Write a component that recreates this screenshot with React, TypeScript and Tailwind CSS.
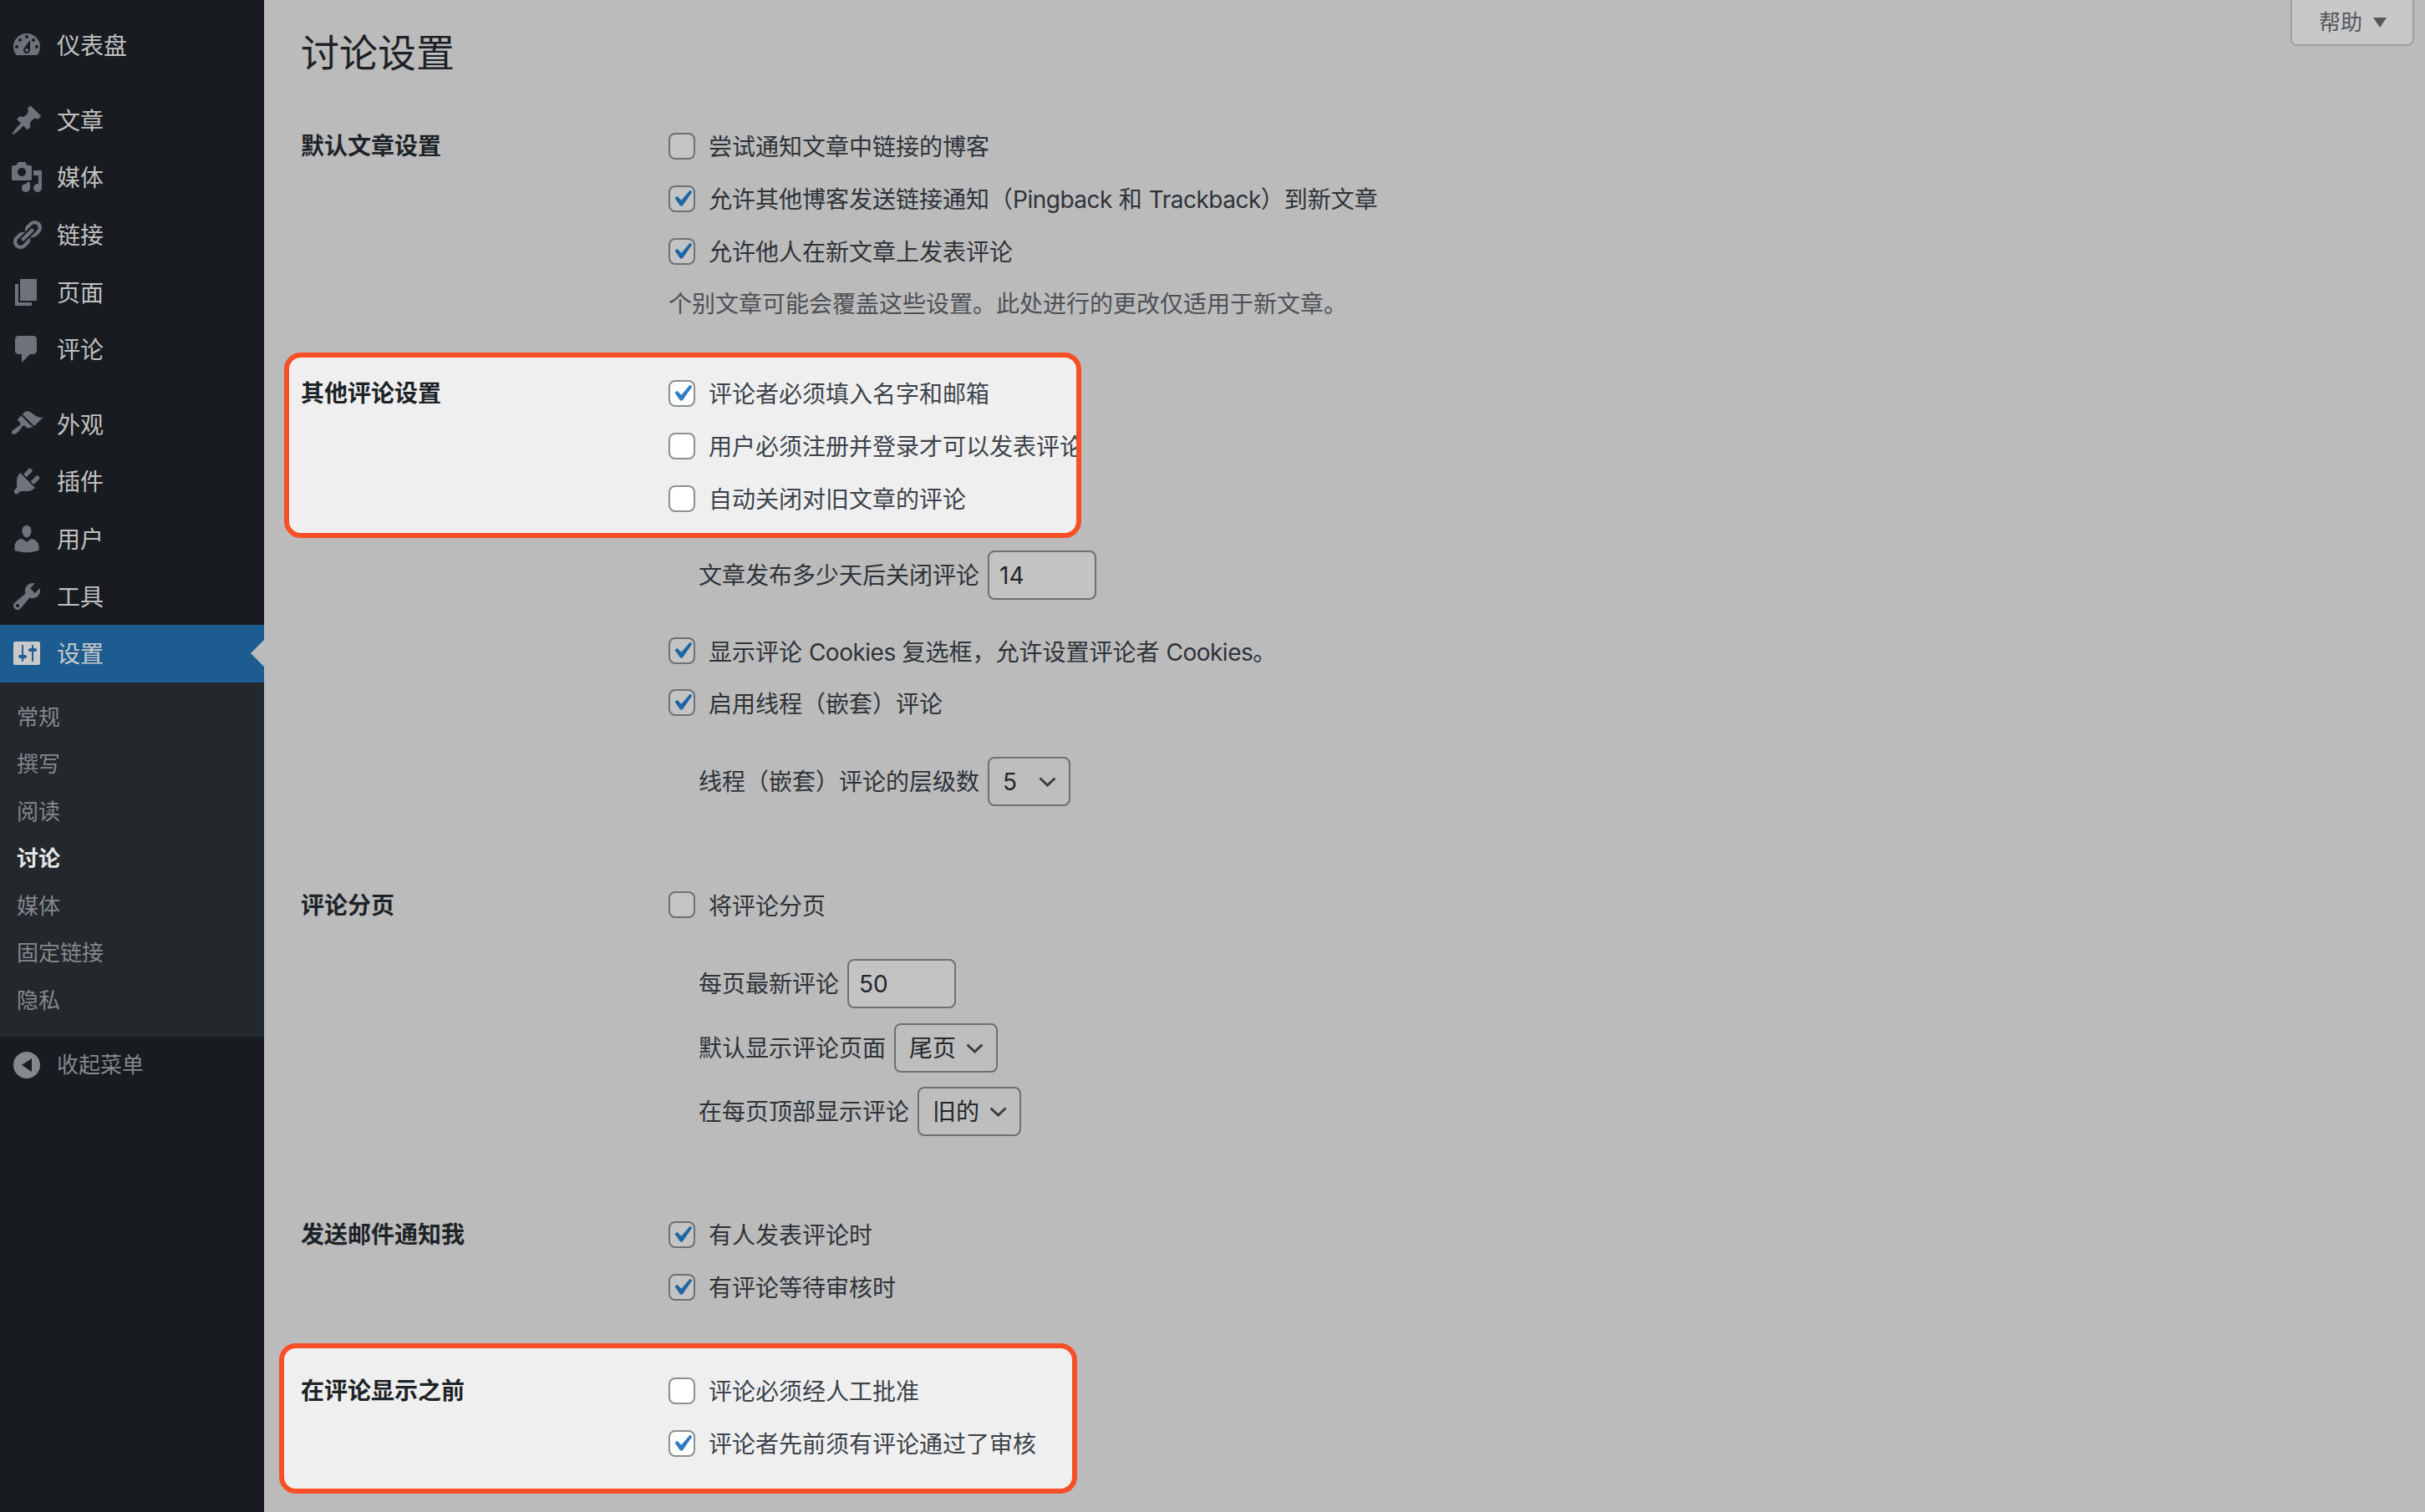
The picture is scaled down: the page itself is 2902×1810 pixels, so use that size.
import React from 'react';

const FONT = 'font-["Inter","Noto_Sans_CJK_SC",sans-serif]';

const ICONS: Record<string, string> = {
	dashboard:
		'M3.76 16h12.48c1.1-1.37 1.76-3.11 1.76-5 0-4.42-3.58-8-8-8s-8 3.58-8 8c0 1.89.66 3.63 1.76 5zM10 4c.55 0 1 .45 1 1s-.45 1-1 1-1-.45-1-1 .45-1 1-1zM6 6c.55 0 1 .45 1 1s-.45 1-1 1-1-.45-1-1 .45-1 1-1zm8 0c.55 0 1 .45 1 1s-.45 1-1 1-1-.45-1-1 .45-1 1-1zm-5.37 5.55L12 7v6c0 1.1-.9 2-2 2s-2-.9-2-2c0-.57.24-1.08.63-1.45zM4 10c.55 0 1 .45 1 1s-.45 1-1 1-1-.45-1-1 .45-1 1-1zm12 0c.55 0 1 .45 1 1s-.45 1-1 1-1-.45-1-1 .45-1 1-1zm-5 3c0-.55-.45-1-1-1s-1 .45-1 1 .45 1 1 1 1-.45 1-1z',
	post: 'M10.44 3.02l1.82-1.82 6.36 6.35-1.83 1.82c-1.05-.68-2.48-.57-3.41.36l-.75.75c-.92.93-1.04 2.35-.35 3.41l-1.83 1.82-2.41-2.41-2.8 2.79c-.42.42-3.38 2.71-3.8 2.29s1.86-3.39 2.28-3.81l2.79-2.79L4.1 9.36l1.83-1.82c1.05.69 2.48.57 3.4-.36l.75-.75c.93-.92 1.05-2.35.36-3.41z',
	media:
		'M13 11V4c0-.55-.45-1-1-1h-1.67L9 1H5L3.67 3H2c-.55 0-1 .45-1 1v7c0 .55.45 1 1 1h10c.55 0 1-.45 1-1zM7 4.5c1.38 0 2.5 1.12 2.5 2.5S8.38 9.5 7 9.5 4.5 8.38 4.5 7 5.62 4.5 7 4.5zM14 6h5v10.5c0 1.38-1.12 2.5-2.5 2.5S14 17.88 14 16.5s1.12-2.5 2.5-2.5c.17 0 .34.02.5.05V9h-3V6zm-4 8.05V13h2v3.5c0 1.38-1.12 2.5-2.5 2.5S7 17.88 7 16.5 8.12 14 9.5 14c.17 0 .34.02.5.05z',
	links:
		'M17.74 2.76c1.68 1.69 1.68 4.41 0 6.1l-1.53 1.52c-1.12 1.12-2.7 1.47-4.14 1.09l2.62-2.61.76-.77.76-.76c.84-.84.84-2.2 0-3.04-.84-.85-2.2-.85-3.04 0l-.77.76-3.38 3.38c-.37-1.44-.02-3.02 1.1-4.14l1.52-1.53c1.69-1.68 4.42-1.68 6.1 0zM8.59 13.43l5.34-5.34c.42-.42.42-1.1 0-1.52-.44-.43-1.13-.39-1.53 0l-5.33 5.34c-.42.42-.42 1.1 0 1.52.44.43 1.13.39 1.52 0zm-.76 2.29l4.14-4.15c.38 1.44.03 3.02-1.09 4.14l-1.52 1.53c-1.69 1.68-4.41 1.68-6.1 0-1.68-1.68-1.68-4.42 0-6.1l1.53-1.52c1.12-1.12 2.7-1.47 4.14-1.1l-4.14 4.15c-.85.84-.85 2.2 0 3.05.84.84 2.2.84 3.04 0z',
	page: 'M6 15V2h10v13H6zm-1 1h8v2H3V5h2v11z',
	comments: 'M5 2h9c1.1 0 2 .9 2 2v7c0 1.1-.9 2-2 2h-2l-5 5v-5H5c-1.1 0-2-.9-2-2V4c0-1.1.9-2 2-2z',
	appearance:
		'M14.48 11.06L7.41 3.99l1.5-1.5c.5-.56 2.3-.47 3.51.32 1.21.8 1.43 1.28 2.91 2.1 1.18.64 2.45 1.26 4.45.85zm-.71.71L6.7 4.7 4.93 6.47c-.39.39-.39 1.02 0 1.41l1.06 1.06c.39.39.39 1.03 0 1.42-.6.6-1.43 1.11-2.21 1.69-.35.26-.7.53-1.01.84C1.43 13.23.4 14.75 1.32 15.67c.92.92 2.44-.11 3.78-1.45.31-.31.59-.66.85-1.01.58-.78 1.09-1.61 1.69-2.21.39-.39 1.02-.39 1.41 0l1.06 1.06c.39.39 1.02.39 1.41 0z',
	plugins:
		'M13.11 4.36L9.87 7.6 8 5.73l3.24-3.24c.35-.34 1.05-.2 1.56.32.52.51.66 1.21.31 1.55zm-8 1.77l.91-1.12 9.01 9.01-1.19.84c-.71.71-2.63 1.16-3.82 1.16H6.14L4.9 17.26c-.59.59-1.54.59-2.12 0-.59-.58-.59-1.53 0-2.12l1.24-1.24v-3.88c0-1.13.4-3.19 1.09-3.89zm7.26 3.97l3.24-3.24c.34-.35 1.04-.21 1.55.31.52.51.66 1.21.31 1.55l-3.24 3.25z',
	users:
		'M10 9.25c-2.27 0-2.73-3.44-2.73-3.44C7 4.02 7.82 2 9.97 2c2.16 0 2.98 2.02 2.71 3.81 0 0-.41 3.44-2.68 3.44zm0 2.57L12.72 10c2.39 0 4.52 2.33 4.52 4.53v2.49s-3.65 1.13-7.24 1.13c-3.65 0-7.24-1.13-7.24-1.13v-2.49c0-2.25 1.94-4.48 4.47-4.48z',
	tools:
		'M16.68 9.77c-1.34 1.34-3.3 1.67-4.95.99l-5.41 6.52c-.99.99-2.59.99-3.58 0s-.99-2.59 0-3.57l6.52-5.42c-.68-1.65-.35-3.61.99-4.95 1.28-1.28 3.12-1.62 4.72-1.06l-2.89 2.89 2.82 2.82 2.86-2.87c.53 1.58.18 3.39-1.08 4.65zM3.81 16.21c.4.39 1.04.39 1.43 0 .4-.4.4-1.04 0-1.43-.39-.4-1.03-.4-1.43 0-.39.39-.39 1.03 0 1.43z',
	settings:
		'M18 16V4c0-.55-.45-1-1-1H3c-.55 0-1 .45-1 1v12c0 .55.45 1 1 1h14c.55 0 1-.45 1-1zM8 11h1c.55 0 1 .45 1 1s-.45 1-1 1H8v1.5c0 .28-.22.5-.5.5s-.5-.22-.5-.5V13H6c-.55 0-1-.45-1-1s.45-1 1-1h1V5.5c0-.28.22-.5.5-.5s.5.22.5.5V11zm5-2h-1c-.55 0-1-.45-1-1s.45-1 1-1h1V5.5c0-.28.22-.5.5-.5s.5.22.5.5V7h1c.55 0 1 .45 1 1s-.45 1-1 1h-1v5.5c0 .28-.22.5-.5.5s-.5-.22-.5-.5V9z',
	collapse: 'M18 10c0-4.42-3.58-8-8-8s-8 3.58-8 8 3.58 8 8 8 8-3.58 8-8zm-5-4v8l-6-4z',
};

const Dashicon: React.FC<{ name: string }> = ({ name }) => (
	<svg viewBox="0 0 20 20" className="w-[40px] h-[40px] shrink-0 fill-current">
		<path d={ICONS[name]} />
	</svg>
);

const MenuItem: React.FC<{ icon: string; label: string; active?: boolean }> = ({ icon, label, active }) => (
	<div className={`flex items-center h-[68.6px] pl-[12px] text-[28px] ${active ? 'bg-[#1d5c90] text-[#c9c9c9]' : 'text-[#6f7379]'}`}>
		<Dashicon name={icon} />
		<span className={`ml-[16px] pt-[2px] ${active ? 'text-[#c9c9c9]' : 'text-[#c0c0c0]'}`}>{label}</span>
		{active && (
			<span className="ml-auto w-0 h-0 border-y-[16px] border-r-[16px] border-y-transparent border-r-[#bbbbbb]" />
		)}
	</div>
);

const Sidebar: React.FC = () => (
	<aside className="w-[316px] shrink-0 h-full bg-[#181b20] flex flex-col pt-[20px]">
		<MenuItem icon="dashboard" label="仪表盘" />
		<div className="mt-[21px]">
			<MenuItem icon="post" label="文章" />
			<MenuItem icon="media" label="媒体" />
			<MenuItem icon="links" label="链接" />
			<MenuItem icon="page" label="页面" />
			<MenuItem icon="comments" label="评论" />
		</div>
		<div className="mt-[21px]">
			<MenuItem icon="appearance" label="外观" />
			<MenuItem icon="plugins" label="插件" />
			<MenuItem icon="users" label="用户" />
			<MenuItem icon="tools" label="工具" />
			<MenuItem icon="settings" label="设置" active />
		</div>
		<div className="bg-[#23282d] pt-[14px] pb-[15px] text-[26px] text-[#85888c]">
			{['常规', '撰写', '阅读', '讨论', '媒体', '固定链接', '隐私'].map((item) => (
				<div
					key={item}
					className={`h-[56.5px] flex items-center pl-[20px] ${item === '讨论' ? 'font-bold text-[#e4e4e4]' : ''}`}
				>
					{item}
				</div>
			))}
		</div>
		<div className="flex items-center h-[68px] pl-[12px] text-[#85888c]">
			<Dashicon name="collapse" />
			<span className="ml-[16px] text-[26px]">收起菜单</span>
		</div>
	</aside>
);

const CheckBox: React.FC<{ checked?: boolean; light?: boolean }> = ({ checked, light }) => (
	<span
		className={`w-[32px] h-[32px] shrink-0 rounded-[8px] border-2 flex items-center justify-center ${
			light ? 'bg-white border-[#8c8f94]' : 'bg-[#c4c4c4] border-[#6f7073]'
		}`}
	>
		{checked && (
			<svg
				viewBox="0 0 20 20"
				className={`w-[40px] h-[40px] shrink-0 fill-current ${light ? 'text-[#2f7cc4]' : 'text-[#1f66a4]'}`}
			>
				<path d="M14.83 4.89l1.34.94-5.81 8.38H9.02L5.78 9.67l1.34-1.25 2.57 2.4z" />
			</svg>
		)}
	</span>
);

const CheckRow: React.FC<{ label: React.ReactNode; checked?: boolean; light?: boolean; h?: string }> = ({ label, checked, light, h }) => (
	<div className={`flex items-center ${h ?? 'h-[63px]'}`}>
		<CheckBox checked={checked} light={light} />
		<span className={`ml-[16px] pt-[3px] whitespace-nowrap ${light ? 'text-[#3c434a]' : 'text-[#2e3338]'}`}>{label}</span>
	</div>
);

const Latin: React.FC<{ children: React.ReactNode }> = ({ children }) => (
	<span className="tracking-[-0.5px]">{children}</span>
);

const Label: React.FC<{ text: string }> = ({ text }) => (
	<div className="-ml-[1px] w-[440px] shrink-0 h-[63px] flex items-center font-bold text-[#1d2327]">{text}</div>
);

const NumberField: React.FC<{ value: string }> = ({ value }) => (
	<span className="w-[130px] h-[59px] ml-[10px] flex items-center pl-[12px] rounded-[8px] border-2 border-[#6f7073] bg-[#c3c3c3] text-[#22262a]">
		{value}
	</span>
);

const SelectField: React.FC<{ value: string; w: string }> = ({ value, w }) => (
	<span className={`${w} h-[59px] ml-[10px] flex items-center justify-between pl-[16px] pr-[15px] rounded-[8px] border-2 border-[#6f7073] bg-[#bebebe] text-[#22262a]`}>
		{value}
		<svg viewBox="0 0 21 12" className="w-[21px] h-[12px] fill-none stroke-[#3a3f45] stroke-[3px]">
			<path d="M1.5 1.5 10.5 10 19.5 1.5" />
		</svg>
	</span>
);

const FieldRow: React.FC<{ label: string; className?: string; children: React.ReactNode }> = ({ label, className, children }) => (
	<div className={`flex items-center pl-[475px] text-[#2e3338] ${className ?? ''}`}>
		<span className="whitespace-nowrap pt-[1px]">{label}</span>
		{children}
	</div>
);

const App: React.FC = () => (
	<div className={`${FONT} flex w-[2902px] h-[1810px] overflow-hidden bg-[#bbbbbb] text-[28px] leading-none`}>
		<Sidebar />
		<main className="flex-1 pl-[45px] flex flex-col">
			<header className="flex justify-between items-start h-[143px]">
				<h1 className="-ml-[1px] text-[46px] text-[#1d2125] mt-[40px]">讨论设置</h1>
				<div className="mr-[13px] w-[148px] h-[55px] bg-[#c8c8c8] border-2 border-t-0 border-[#a0a0a0] rounded-b-[8px] flex items-center pl-[32px] text-[26px] text-[#55585c]">
					帮助
					<span className="ml-[13px] w-0 h-0 border-x-[8px] border-t-[12px] border-x-transparent border-t-[#55585c]" />
				</div>
			</header>

			<section className="flex">
				<Label text="默认文章设置" />
				<div>
					<CheckRow label="尝试通知文章中链接的博客" />
					<CheckRow
						label={
							<>
								允许其他博客发送链接通知（<Latin>Pingback</Latin> 和 <Latin>Trackback</Latin>）到新文章
							</>
						}
						checked
					/>
					<CheckRow label="允许他人在新文章上发表评论" checked />
					<div className="h-[63px] flex items-center text-[#4d5156]">个别文章可能会覆盖这些设置。此处进行的更改仅适用于新文章。</div>
				</div>
			</section>

			<section className="mt-[27px] -ml-[21px] w-[954px] h-[222px] shrink-0 border-[6px] border-[#f94f26] rounded-[20px] overflow-hidden bg-[#efefef] flex pl-[15px] pt-[11px]">
				<Label text="其他评论设置" />
				<div>
					<CheckRow label="评论者必须填入名字和邮箱" checked light />
					<CheckRow label="用户必须注册并登录才可以发表评论" light />
					<CheckRow label="自动关闭对旧文章的评论" light />
				</div>
			</section>

			<FieldRow label="文章发布多少天后关闭评论" className="mt-[15px]">
				<NumberField value="14" />
			</FieldRow>

			<div className="mt-[30px] pl-[439px]">
				<CheckRow
					label={
						<>
							显示评论 <Latin>Cookies</Latin> 复选框，允许设置评论者 <Latin>Cookies</Latin>。
						</>
					}
					checked
					h="h-[62px]"
				/>
				<CheckRow label="启用线程（嵌套）评论" checked h="h-[62px]" />
			</div>

			<FieldRow label="线程（嵌套）评论的层级数" className="mt-[34px]">
				<SelectField value="5" w="w-[99px]" />
			</FieldRow>

			<section className="flex mt-[87px]">
				<Label text="评论分页" />
				<CheckRow label="将评论分页" h="h-[62px]" />
			</section>

			<FieldRow label="每页最新评论" className="mt-[33px]">
				<NumberField value="50" />
			</FieldRow>
			<FieldRow label="默认显示评论页面" className="mt-[18px]">
				<SelectField value="尾页" w="w-[124px]" />
			</FieldRow>
			<FieldRow label="在每页顶部显示评论" className="mt-[17px]">
				<SelectField value="旧的" w="w-[124px]" />
			</FieldRow>

			<section className="flex mt-[86px]">
				<Label text="发送邮件通知我" />
				<div>
					<CheckRow label="有人发表评论时" checked />
					<CheckRow label="有评论等待审核时" checked />
				</div>
			</section>

			<section className="mt-[36px] -ml-[27px] w-[955px] h-[180px] shrink-0 border-[6px] border-[#f94f26] rounded-[20px] overflow-hidden bg-[#efefef] flex pl-[21px] pt-[19px]">
				<Label text="在评论显示之前" />
				<div>
					<CheckRow label="评论必须经人工批准" light />
					<CheckRow label="评论者先前须有评论通过了审核" checked light />
				</div>
			</section>
		</main>
	</div>
);

export default App;
